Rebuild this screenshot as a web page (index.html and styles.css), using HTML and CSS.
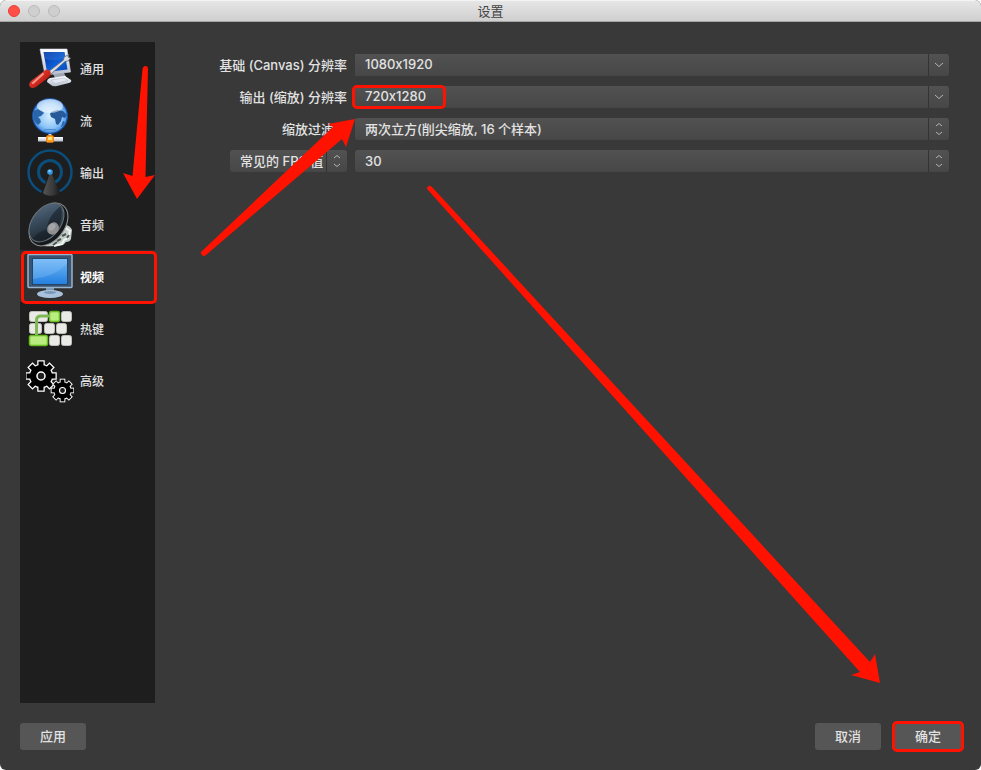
FILE: index.html
```html
<!DOCTYPE html>
<html lang="zh-CN">
<head>
<meta charset="UTF-8">
<meta name="viewport" content="width=device-width, initial-scale=1.0">
<title>设置</title>
<link rel="stylesheet" href="styles.css">
</head>
<body>
<div class="window">
  <header class="titlebar">
    <div class="lights">
      <span class="light close"></span>
      <span class="light"></span>
      <span class="light"></span>
    </div>
    <h1>设置</h1>
  </header>

  <div class="content">
    <nav class="sidebar">
      <button type="button" class="item">
        <svg class="icon" viewBox="0 0 48 48">
          <defs>
            <linearGradient id="screen" x1="0" y1="0" x2="1" y2="1"><stop offset="0" stop-color="#08309a"/><stop offset=".6" stop-color="#0d62dc"/><stop offset="1" stop-color="#0a48b4"/></linearGradient>
            <linearGradient id="handle" x1="0" y1="0" x2="1" y2="1"><stop offset="0" stop-color="#f56a5a"/><stop offset=".5" stop-color="#d42a20"/><stop offset="1" stop-color="#8d0b05"/></linearGradient>
            <linearGradient id="silver" x1="0" y1="0" x2="0" y2="1"><stop offset="0" stop-color="#ffffff"/><stop offset="1" stop-color="#b4bccb"/></linearGradient>
          </defs>
          <path d="M27 30l11-1 2 4-10 3z" fill="#9da5b6"/>
          <path d="M24 34l15-2 6 4q1 2-2 3l-12 3q-4 1-6-1l-4-3q0-3 3-4z" fill="url(#silver)"/>
          <path d="M25 36l13-2 4 2.500-13 3z" fill="#e4e8f1" stroke="#b4bccd" stroke-width=".6"/>
          <path d="M14 5L41 5 44.500 28 19 31z" fill="url(#silver)" stroke="#d5dae6" stroke-width=".6"/>
          <path d="M17.500 8H38.500L41.500 25.500 21 28z" fill="url(#screen)"/>
          <path d="M17.500 8H38.500L39.500 14Q29 18 19 15z" fill="#3d82dc" opacity=".35"/>
          <path d="M22 28L37.500 16 38 13 43 10.500 42 13 44.500 14 42 17 39 17.500 24 31z" fill="#d9dde3" stroke="#5c6370" stroke-width=".8"/>
          <path d="M18 27q3-3 6 0 2 3-1 6L10 43q-4 2-6 0-2-3 1-6z" fill="url(#handle)"/>
          <path d="M17 30L7 39" stroke="#ffc1b4" stroke-width="2" stroke-linecap="round" opacity=".7"/>
        </svg>
        <span>通用</span>
      </button>
      <button type="button" class="item">
        <svg class="icon" viewBox="0 0 48 48">
          <defs>
            <radialGradient id="globe" cx=".5" cy=".5" r=".5"><stop offset="0" stop-color="#d9f0ff"/><stop offset=".7" stop-color="#8bc4f7"/><stop offset=".92" stop-color="#559be8"/><stop offset="1" stop-color="#1450a8"/></radialGradient>
          </defs>
          <path d="M24 37v4" stroke="#d7d9e2" stroke-width="3"/>
          <rect x="12" y="41" width="25" height="4.500" fill="url(#silver)"/>
          <rect x="20.500" y="39.500" width="7" height="7" rx="1" fill="#ff9d1c" stroke="#e36c00" stroke-width=".6"/>
          <rect x="22" y="41" width="4" height="3" fill="#ffe27a"/>
          <circle cx="24" cy="20" r="17.500" fill="url(#globe)" stroke="#1754ad" stroke-width="1"/>
          <path d="M8 15l4-2 4 2 2 2-3 3-3 1 2 2 1 3-3 3-3-3-2-5z" fill="#2a65a8"/>
          <path d="M25 16l6-2 6 1 4 4-2 3-3-1-1 4-3 4-2-1-1-5-4-2-1-3z" fill="#265a9a"/>
          <path d="M37 25l2 1-2 4-2 1z" fill="#2a65a8"/>
          <ellipse cx="24" cy="10" rx="13" ry="7" fill="#fff" opacity=".55"/>
          <path d="M18 34q6-1 12 0" fill="none" stroke="#4a86c8" stroke-width="1"/>
        </svg>
        <span>流</span>
      </button>
      <button type="button" class="item">
        <svg class="icon" viewBox="0 0 48 48">
          <defs>
            <linearGradient id="cone"><stop offset="0" stop-color="#555"/><stop offset=".6" stop-color="#383838"/><stop offset="1" stop-color="#1b1b1b"/></linearGradient>
          </defs>
          <circle cx="24" cy="24" r="21.500" fill="none" stroke="#0b4d7b" stroke-width="2.500"/>
          <circle cx="24" cy="24" r="11.500" fill="none" stroke="#0b4d7b" stroke-width="3"/>
          <path d="M24 24L14 48H36z" fill="#1e1e1e"/>
          <path d="M24 25L17 45Q22 50 34 46L26 26z" fill="url(#cone)"/>
          <circle cx="24" cy="24" r="2.800" fill="#2f97e6"/>
          <circle cx="23.500" cy="23" r="1.200" fill="#8ccdfc"/>
        </svg>
        <span>输出</span>
      </button>
      <button type="button" class="item">
        <svg class="icon" viewBox="0 0 48 48">
          <defs>
            <linearGradient id="speaker" x1="0" y1="0" x2="1" y2="1"><stop offset="0" stop-color="#5a7185"/><stop offset=".4" stop-color="#3a4d5e"/><stop offset="1" stop-color="#141a20"/></linearGradient>
          </defs>
          <path d="M38 24q7 2 8 6l-1 9q-1 3-5 3l-3 3q-8 2-21 1z" fill="#c5cdc9"/>
          <path d="M38 27l6 4-2 7-4 2-2 4-8 2" fill="none" stroke="#f1f5f2" stroke-width="2"/>
          <path d="M36 36l4-2M41 38l2-3M31 41l4-2M27 45l4-3" stroke="#4b5552" stroke-width="2"/>
          <ellipse cx="22.500" cy="24.500" rx="16" ry="24" transform="rotate(38 22.500 24.500)" fill="#16191c" stroke="#8f9598" stroke-width="1"/>
          <ellipse cx="20.500" cy="22.500" rx="14" ry="22" transform="rotate(38 20.500 22.500)" fill="url(#speaker)" stroke="#6b7276" stroke-width="1"/>
          <path d="M35 6Q24 14 21 26L29 33Q38 19 35 6z" fill="#0e1419" opacity=".5"/>
          <path d="M6 39Q13 31 22 29L29 33Q18 43 6 39z" fill="#0e1419" opacity=".4"/>
          <ellipse cx="27" cy="28.500" rx="5.500" ry="6.500" transform="rotate(38 27 28.500)" fill="#8f8f91"/>
          <ellipse cx="26" cy="27" rx="3" ry="4" transform="rotate(38 26 27)" fill="#a5a5a7"/>
        </svg>
        <span>音频</span>
      </button>
      <button type="button" class="item active marked">
        <svg class="icon" viewBox="0 0 48 48">
          <defs>
            <linearGradient id="display" x1="0" y1="0" x2="0" y2="1"><stop offset="0" stop-color="#73b9f5"/><stop offset="1" stop-color="#2580df"/></linearGradient>
          </defs>
          <path d="M20 36h8v5h-8z" fill="#7795b5"/>
          <ellipse cx="24" cy="42" rx="13" ry="4" fill="#a9c2dc"/>
          <ellipse cx="24" cy="40.500" rx="6" ry="1.500" fill="#7896b6"/>
          <rect x="2" y="2.500" width="44" height="33" rx="1" fill="#395472" stroke="#9bb4cd" stroke-width="1.500"/>
          <rect x="6" y="6" width="36" height="27" fill="#254565"/>
          <rect x="7" y="7" width="34" height="25" fill="url(#display)"/>
          <path d="M7 7H41V12Q28 25 7 27z" fill="#9bd0ff" opacity=".25"/>
        </svg>
        <span>视频</span>
      </button>
      <button type="button" class="item">
        <svg class="icon" viewBox="0 0 48 48">
          <g fill="#e9e9e5" stroke="#bdbdb8" stroke-width="1">
            <rect x="3.500" y="7.500" width="18" height="10" rx="2"/>
            <rect x="35.500" y="7.500" width="10" height="10" rx="2"/>
            <rect x="3.500" y="19.500" width="12" height="10" rx="2"/>
            <rect x="18.500" y="19.500" width="10" height="10" rx="2"/>
            <rect x="30.500" y="19.500" width="10" height="10" rx="2"/>
            <rect x="23.500" y="31.500" width="10" height="10" rx="2"/>
            <rect x="35.500" y="31.500" width="10" height="10" rx="2"/>
          </g>
          <g fill="#b9ed80" stroke="#68bb1e" stroke-width="1.500">
            <rect x="23.500" y="7.500" width="10" height="10" rx="2"/>
            <rect x="3.500" y="31.500" width="18" height="10" rx="2"/>
          </g>
          <path d="M10.500 31V16Q10.500 12 15 12H24" fill="none" stroke="#7eb955" stroke-width="3"/>
        </svg>
        <span>热键</span>
      </button>
      <button type="button" class="item">
        <svg class="icon" viewBox="0 0 48 48">
          <defs>
            <g id="teeth">
              <rect x="-2.500" y="-14.500" width="5" height="29"/>
              <rect x="-2.500" y="-14.500" width="5" height="29" transform="rotate(45)"/>
              <rect x="-2.500" y="-14.500" width="5" height="29" transform="rotate(90)"/>
              <rect x="-2.500" y="-14.500" width="5" height="29" transform="rotate(135)"/>
              <circle r="11"/>
            </g>
            <g id="gear">
              <use href="#teeth" fill="#fff" stroke="#fff" stroke-width="2.500"/>
              <use href="#teeth" fill="#000"/>
              <circle r="4" fill="#1e1e1e" stroke="#fff" stroke-width="1.500"/>
            </g>
          </defs>
          <use href="#gear" transform="translate(15 20)"/>
          <use href="#gear" transform="translate(36.500 34.500) scale(.75)"/>
        </svg>
        <span>高级</span>
      </button>
    </nav>

    <form class="settings" id="settings">
      <label for="base">基础 (Canvas) 分辨率</label>
      <div class="field combo">
        <input type="text" id="base" value="1080x1920">
        <button type="button" class="drop" aria-label="基础分辨率列表"><svg viewBox="0 0 20 22"><path d="M6 9l4 3.500L14 9"/></svg></button>
      </div>

      <label for="output">输出 (缩放) 分辨率</label>
      <div class="field combo">
        <input type="text" id="output" value="720x1280">
        <button type="button" class="drop" aria-label="输出分辨率列表"><svg viewBox="0 0 20 22"><path d="M6 9l4 3.500L14 9"/></svg></button>
        <span class="mark"></span>
      </div>

      <label for="filter">缩放过滤器</label>
      <div class="field">
        <select id="filter"><option>两次立方(削尖缩放, 16 个样本)</option></select>
        <span class="drop"><svg viewBox="0 0 20 22"><path d="M7 8l3-2.500L13 8M7 14l3 2.500 3-2.500"/></svg></span>
      </div>

      <div class="field fps-type">
        <select id="fpsType" aria-label="FPS 类型"><option>常见的 FPS 值</option></select>
        <span class="drop"><svg viewBox="0 0 20 22"><path d="M7 8l3-2.500L13 8M7 14l3 2.500 3-2.500"/></svg></span>
      </div>
      <div class="field">
        <select id="fps" aria-label="常见的 FPS 值"><option>30</option></select>
        <span class="drop"><svg viewBox="0 0 20 22"><path d="M7 8l3-2.500L13 8M7 14l3 2.500 3-2.500"/></svg></span>
      </div>
    </form>
  </div>

  <footer class="actions">
    <button type="button" class="btn apply">应用</button>
    <button type="button" class="btn">取消</button>
    <button type="submit" form="settings" class="btn marked">确定</button>
  </footer>

  <!-- 步骤箭头 -->
  <svg class="arrows" width="981" height="770" viewBox="0 0 981 770">
    <path d="M142.500 69Q143 66 145.500 66T148 69L145.500 177 155 175 137 199 123 173 132.500 176z"/>
    <path d="M202 251L333 127 328 124 355 119 346 147 342 139 206 255Q203 257 201.500 254.500T202 251z"/>
    <path d="M432 187L870 662 875 654 880 683 851 675 860 672 428 190Q426 188 428 186.500T432 187z"/>
  </svg>
</div>
</body>
</html>
```
FILE: styles.css
```css
body {
  margin: 0;
  background: #fff;
  font-family: Inter, "Noto Sans CJK SC", sans-serif;
  font-size: 13px;
  font-variant-ligatures: no-contextual;
  color: #e2e2e2;
}
button, input, select {
  margin: 0;
  padding: 0;
  border: none;
  box-sizing: border-box;
  font: inherit;
  font-variant-ligatures: no-contextual;
  color: inherit;
}
.window {
  position: relative;
  display: flex;
  flex-direction: column;
  min-height: 100vh;
  background: #393939;
  border-radius: 6px;
  overflow: hidden;
}

.titlebar {
  display: flex;
  align-items: center;
  height: 22px;
  box-sizing: border-box;
  padding: 0 8px;
  background: linear-gradient(#e6e6e6, #cfcfcf);
  border-top: 1px solid #f4f4f4;
  border-bottom: 1px solid #a5a5a5;
}
.titlebar h1 {
  flex: 1;
  margin: 0;
  text-align: center;
  font-size: 13px;
  font-weight: 400;
  line-height: 20px;
  color: #444;
}
.lights {
  display: flex;
  gap: 8px;
  width: 52px;
  margin-right: -52px;
}
.light {
  width: 12px;
  height: 12px;
  box-sizing: border-box;
  border: 1px solid #b9b9b9;
  border-radius: 50%;
  background: #cfcfcf;
}
.close {
  background: #ff4f47;
  border-color: #e5403a;
}

.content {
  flex: 1;
  display: flex;
  padding: 20px 20px 0;
}
.sidebar {
  width: 135px;
  background: #1e1e1e;
}
.item {
  position: relative;
  display: flex;
  align-items: center;
  gap: 6px;
  width: 100%;
  height: 52px;
  padding: 2px 6px;
  background: none;
  font-size: 12px;
  font-weight: 500;
  line-height: 18px;
}
.item span {
  padding-top: 4px;
}
.item.active {
  background: #303030;
  color: #fff;
  font-weight: 700;
}
.icon {
  flex: none;
  width: 48px;
  height: 48px;
}

.settings {
  flex: 1;
  display: grid;
  grid-template-columns: 192px 1fr;
  grid-auto-rows: 22px;
  align-content: start;
  gap: 10px 8px;
  padding: 12px 12px 0 0;
  font-weight: 500;
}
.settings label {
  text-align: right;
  line-height: 22px;
  white-space: nowrap;
}
.field {
  position: relative;
  display: flex;
  height: 22px;
  background: linear-gradient(#525252, #474747);
  border-radius: 3px;
}
.combo {
  border-radius: 0 3px 3px 0;
}
.field input, .field select {
  flex: 1;
  min-width: 0;
  height: 22px;
  padding: 0 10px;
  background: none;
  appearance: none;
  line-height: 22px;
}
.field input {
  padding-bottom: 2px;
}
.field option {
  background: #474747;
}
.drop {
  width: 21px;
  height: 22px;
  box-sizing: border-box;
  border-left: 1px solid #333;
  background: none;
}
.field span.drop {
  position: absolute;
  top: 0;
  right: 0;
  pointer-events: none;
}
.drop svg {
  display: block;
  width: 20px;
  height: 22px;
  fill: none;
  stroke: #b5b5b5;
  stroke-width: 1;
}
.fps-type {
  width: 117px;
  justify-self: end;
}

.actions {
  display: flex;
  align-items: center;
  gap: 14px;
  padding: 20px;
}
.btn {
  position: relative;
  width: 66px;
  height: 27px;
  padding-bottom: 2px;
  background: #565656;
  border-radius: 3px;
  font-weight: 500;
}
.apply {
  margin-right: auto;
}

/* 红色标注 */
.marked::after, .mark {
  content: "";
  position: absolute;
  box-sizing: border-box;
  border: 3px solid #ff1200;
  border-radius: 5px;
  pointer-events: none;
}
.item.marked::after {
  top: 1px;
  left: 1px;
  right: -2px;
  bottom: -2px;
}
.btn.marked::after {
  top: -2px;
  left: -3px;
  right: -3px;
  bottom: -2px;
}
.mark {
  top: -1px;
  left: -3px;
  width: 94px;
  height: 24px;
}
.arrows {
  position: absolute;
  top: 0;
  left: 0;
  fill: #ff1200;
  pointer-events: none;
}
```
